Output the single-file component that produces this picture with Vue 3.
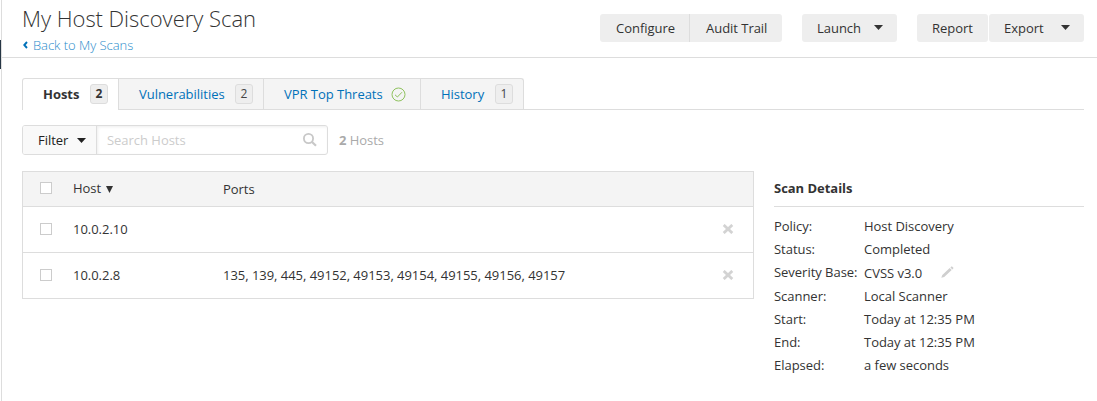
<script setup>
const tabs = [
  { label: 'Hosts', count: 2, cls: 'hosts active' },
  { label: 'Vulnerabilities', count: 2, cls: 'vulns' },
  { label: 'VPR Top Threats', check: true, cls: 'vpr' },
  { label: 'History', count: 1, cls: 'history' },
]
const hosts = [
  { ip: '10.0.2.10', ports: '' },
  { ip: '10.0.2.8', ports: '135, 139, 445, 49152, 49153, 49154, 49155, 49156, 49157' },
]
const details = [
  { label: 'Policy:', value: 'Host Discovery' },
  { label: 'Status:', value: 'Completed' },
  { label: 'Severity Base:', value: 'CVSS v3.0', edit: true },
  { label: 'Scanner:', value: 'Local Scanner' },
  { label: 'Start:', value: 'Today at 12:35 PM' },
  { label: 'End:', value: 'Today at 12:35 PM' },
  { label: 'Elapsed:', value: 'a few seconds' },
]
</script>

<template>
  <div class="page">
    <div class="rail"><div class="rail-mark"></div></div>
    <main class="main">
      <header class="header">
        <div class="heading">
          <h1>My Host Discovery Scan</h1>
          <a class="back">
            <svg width="5" height="8" viewBox="0 0 5 8"><path d="M4 1 L1.3 4 L4 7" fill="none" stroke="#0071b9" stroke-width="1.9" /></svg>
            <span>Back to My Scans</span>
          </a>
        </div>
        <div class="actions">
          <button class="btn configure">Configure</button>
          <button class="btn audit">Audit Trail</button>
          <button class="btn launch">Launch<svg class="caret" width="9" height="5" viewBox="0 0 9 5"><path d="M0 0H9L4.5 5Z" fill="#333" /></svg></button>
          <button class="btn report">Report</button>
          <button class="btn export">Export<svg class="caret" width="9" height="5" viewBox="0 0 9 5"><path d="M0 0H9L4.5 5Z" fill="#333" /></svg></button>
        </div>
      </header>

      <nav class="tabs">
        <a v-for="t in tabs" :key="t.label" class="tab" :class="t.cls">
          <span>{{ t.label }}</span>
          <svg v-if="t.check" class="check" width="15" height="15" viewBox="0 0 15 15" fill="none" stroke="#8fc25e">
            <circle cx="7.5" cy="7.5" r="6.5" stroke-width="1" />
            <path d="M4 7.8 L6.4 10 L11 5.2" stroke-width="1" />
          </svg>
          <span v-else class="count">{{ t.count }}</span>
        </a>
      </nav>

      <div class="toolbar">
        <div class="search">
          <button class="filter">Filter<svg class="caret" width="9" height="5" viewBox="0 0 9 5"><path d="M0 0H9L4.5 5Z" fill="#222" /></svg></button>
          <div class="field">
            <span>Search Hosts</span>
            <svg width="14" height="14" viewBox="0 0 14 14" fill="none" stroke="#c8c8c8">
              <circle cx="5.5" cy="5.5" r="4.6" stroke-width="1.8" />
              <path d="M9 9 L13 12.8" stroke-width="2.2" />
            </svg>
          </div>
        </div>
        <div class="total"><b>2</b> Hosts</div>
      </div>

      <div class="content">
        <section class="table">
          <div class="row head">
            <i class="box"></i>
            <span class="host">Host<svg class="sort" width="7" height="7" viewBox="0 0 7 7"><path d="M0 0H7L3.5 7Z" fill="#333" /></svg></span>
            <span class="ports">Ports</span>
          </div>
          <div v-for="h in hosts" :key="h.ip" class="row">
            <i class="box"></i>
            <span class="host">{{ h.ip }}</span>
            <span class="ports">{{ h.ports }}</span>
            <svg class="remove" width="12" height="10" viewBox="0 0 12 10"><path d="M1.7 0.9 L10.3 9.1 M10.3 0.9 L1.7 9.1" stroke="#d3d3d3" stroke-width="2.7" /></svg>
          </div>
        </section>

        <aside class="details">
          <h2>Scan Details</h2>
          <dl>
            <div v-for="d in details" :key="d.label" class="item" :class="{ edit: d.edit }">
              <dt>{{ d.label }}</dt>
              <dd>
                <span>{{ d.value }}</span>
                <svg v-if="d.edit" class="pencil" width="13" height="12" viewBox="0 0 13 12" fill="#cfcfcf">
                  <path d="M0.3 11.8 L1.3 8.9 L8.7 2 L10.7 4 L3.2 10.9 Z M9.4 1.4 L10.8 0.2 L12.6 2 L11.4 3.4 Z" />
                </svg>
              </dd>
            </div>
          </dl>
        </aside>
      </div>
    </main>
  </div>
</template>

<style>
body { background: #fff; }
</style>

<style scoped>
* { box-sizing: border-box; }
.page {
  display: flex;
  width: 1097px;
  height: 401px;
  overflow: hidden;
  background: #fff;
  color: #333;
  font: 13px/18px "Open Sans", "Noto Sans", sans-serif;
  letter-spacing: -0.03px;
}
.rail { width: 2px; flex: none; border-right: 1px solid #ddd; padding-top: 40px; }
.rail-mark { height: 29px; background: #263645; }
.main { flex: 1; }
.header {
  height: 58px;
  display: flex;
  justify-content: space-between;
  border-bottom: 1px solid #ddd;
  padding: 0 13px 0 20px;
}
h1 { margin: 3px 0 0; font-size: 22px; line-height: 30px; font-weight: 300; white-space: nowrap; }
.back { display: flex; align-items: center; gap: 6px; margin-top: 3px; color: #2a8ccb; font-weight: 300; }
.back svg { margin-left: 1px; }
.back span { margin-left: -1px; }
.actions { display: flex; padding-top: 14px; }
.btn {
  display: flex;
  align-items: center;
  height: 28px;
  border: 0;
  padding: 0 0 0 16px;
  border-radius: 3px;
  background: #eee;
  color: #333;
  font: inherit;
  letter-spacing: inherit;
}
.configure { width: 90px; border-right: 1px solid #ddd; border-radius: 3px 0 0 3px; }
.audit { width: 92px; border-radius: 0 3px 3px 0; margin-right: 20px; }
.launch { width: 95px; padding-left: 15px; margin-right: 20px; }
.launch .caret { margin: -2px 0 0 13px; }
.report { width: 71px; padding-left: 15px; margin-right: 1px; }
.export { width: 95px; padding-left: 15px; }
.export .caret { margin: -2px 0 0 17px; }

.tabs { display: flex; height: 32px; margin: 20px 13px 0 20px; border-bottom: 1px solid #ddd; }
.tab {
  display: flex;
  align-items: center;
  height: 31px;
  padding-left: 20px;
  border: 1px solid #ddd;
  border-width: 1px 1px 0 0;
  background: #f4f4f4;
  color: #0071b9;
}
.tab.active {
  height: 32px;
  padding-bottom: 1px;
  border-left-width: 1px;
  border-top-left-radius: 3px;
  background: #fff;
  color: #333;
  font-weight: 700;
}
.hosts { width: 97px; }
.vulns { width: 145px; }
.vpr { width: 157px; }
.history { width: 103px; border-top-right-radius: 3px; }
.count {
  width: 18px;
  height: 20px;
  margin: 0 10px 0 auto;
  border: 1px solid #ddd;
  border-radius: 3px;
  background: #eee;
  color: #444;
  font-size: 12px;
  line-height: 18px;
  text-align: center;
}
.active .count { color: #333; }
.check { margin: 0 14px 0 auto; }

.toolbar { display: flex; margin: 15px 0 0 20px; height: 30px; }
.search { display: flex; width: 306px; border: 1px solid #ddd; border-radius: 3px; overflow: hidden; }
.filter {
  display: flex;
  align-items: center;
  width: 74px;
  border: 0;
  border-right: 1px solid #ddd;
  padding: 0 0 0 15px;
  background: #f9f9f9;
  color: #222;
  font: inherit;
  letter-spacing: inherit;
}
.filter .caret { margin-left: 9px; }
.field {
  flex: 1;
  display: flex;
  align-items: center;
  justify-content: space-between;
  padding: 0 10px 0 10px;
  color: #ccc;
  box-shadow: inset 1px 1px 3px #eee;
}
.total { margin-left: 11px; line-height: 30px; color: #aaa; }

.content { display: flex; margin: 16px 13px 0 20px; }
.table { width: 732px; height: 128px; border: 1px solid #ddd; }
.row { display: flex; align-items: center; height: 46px; padding: 0 0 1px 17px; border-bottom: 1px solid #ddd; }
.row:last-child { border-bottom: 0; height: 45px; }
.row.head { height: 35px; padding-bottom: 2px; background: #f4f4f4; }
.box { width: 12px; height: 12px; margin-right: 21px; border: 1px solid #ccc; background: #fff; }
.host { width: 150px; }
.ports { flex: 1; }
.head .ports { padding-top: 2px; }
.sort { margin-left: 5px; }
.remove { margin-right: 19px; }

.details { width: 310px; margin-left: 20px; }
h2 { height: 36px; margin: 0; border-bottom: 1px solid #ddd; font-size: 13px; line-height: 35px; font-weight: 700; }
dl { margin: 8px 0 0; }
.item { display: flex; height: 23px; line-height: 23px; }
dt { width: 90px; white-space: nowrap; }
dd { display: flex; margin: 0; }
.edit { height: 24px; }
.edit dd { padding-top: 1px; }
.pencil { margin: 4px 0 0 19px; }
</style>
